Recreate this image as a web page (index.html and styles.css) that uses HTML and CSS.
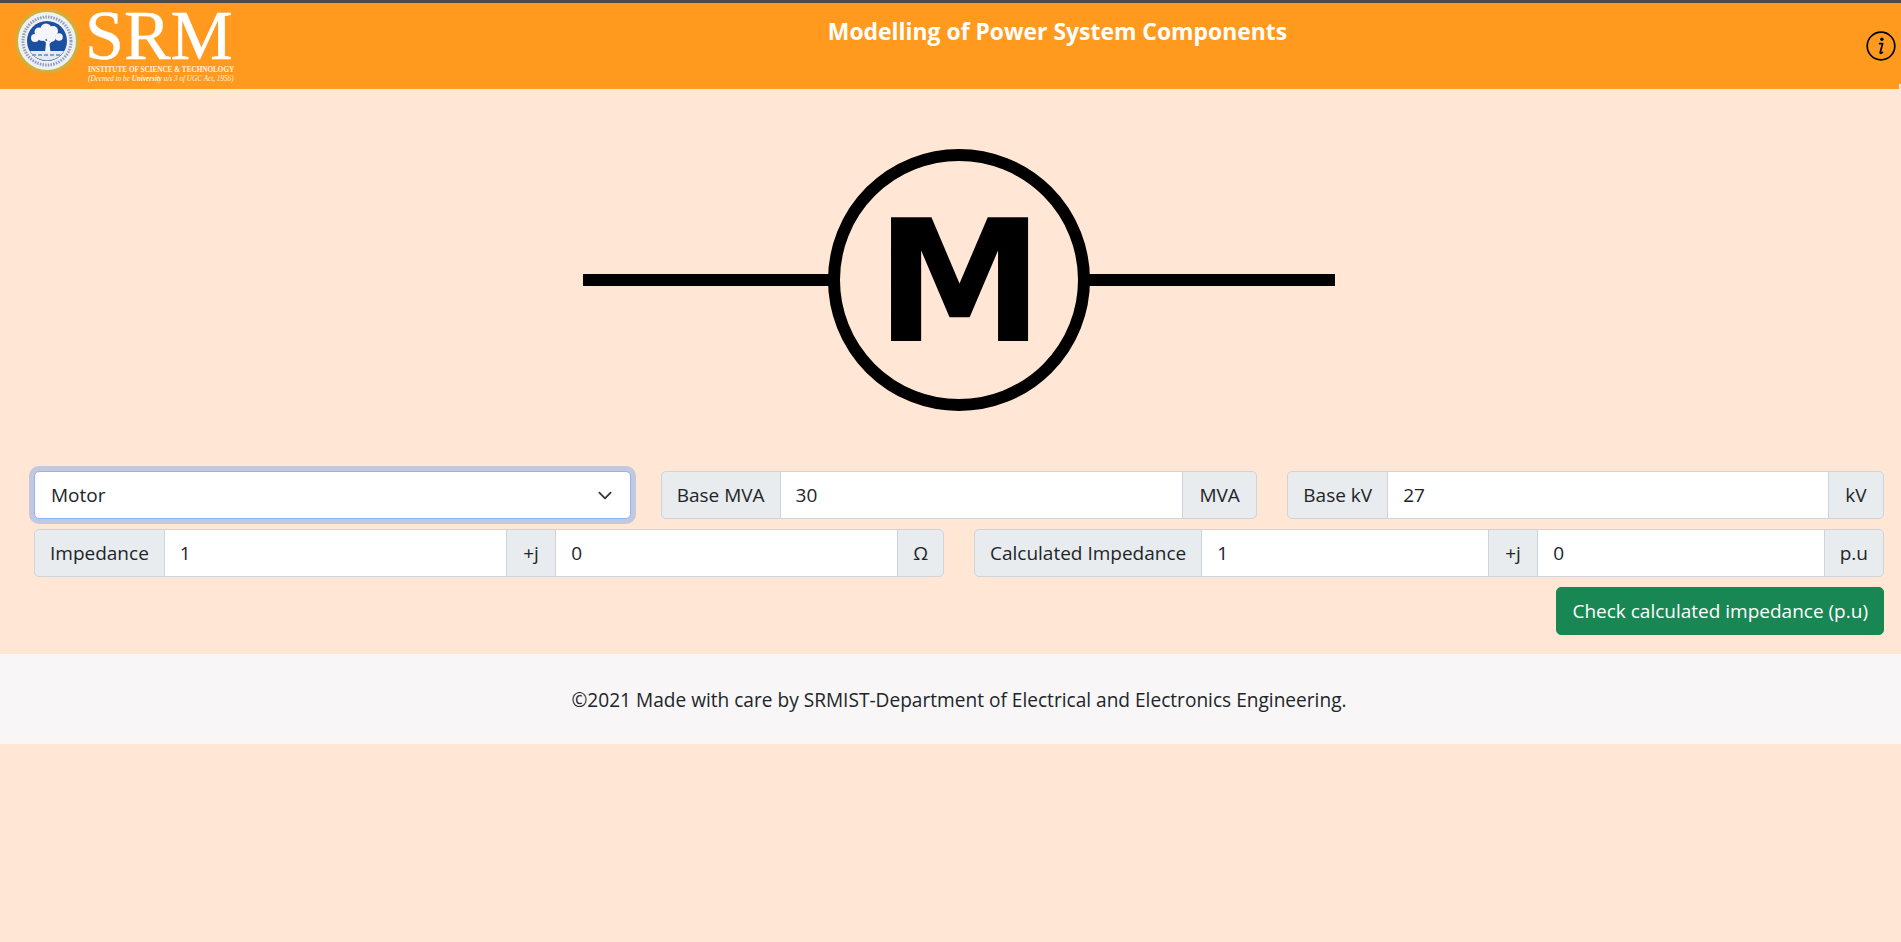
FILE: index.html
```html
<!DOCTYPE html>
<html lang="en">
<head>
<meta charset="utf-8">
<title>Modelling of Power System Components</title>
<link rel="stylesheet" href="styles.css">
</head>
<body>
<header class="topbar">
  <div class="brand">
    <svg class="seal" width="64" height="64" viewBox="0 0 64 64" aria-label="SRM seal">
      <circle cx="32" cy="32" r="30.500" fill="#eef0f3" stroke="#cdb13c" stroke-width="3"/>
      <circle cx="32" cy="32" r="24" fill="none" stroke="#8d9dbd" stroke-width="3" stroke-dasharray="1.500 1.200"/>
      <circle cx="32" cy="32" r="20" fill="#1c4f9f"/>
      <path d="M15 42a20 20 0 0 0 34 0z" fill="#e6eaf0"/>
      <path d="M17 46h30" stroke="#8d9dbd" stroke-width="2" stroke-dasharray="4 2"/>
      <path d="M30 43.500l1-10-5-4 6 2.500 1.500-4 .5 5 5-3-4.500 5 1 8.500z" fill="#f4f6fa"/>
      <g fill="#f4f6fa">
        <circle cx="24" cy="23" r="4.500"/>
        <circle cx="31" cy="20" r="5.500"/>
        <circle cx="38" cy="22" r="5"/>
        <circle cx="44" cy="28" r="3.800"/>
        <circle cx="20" cy="29" r="4"/>
        <circle cx="27" cy="27" r="5"/>
        <circle cx="36" cy="28" r="5"/>
      </g>
    </svg>
    <div class="wordmark">
      <span class="wordmark-name">SRM</span>
      <span class="wordmark-line">INSTITUTE OF SCIENCE &amp; TECHNOLOGY</span>
      <span class="wordmark-note">(Deemed to be <b>University</b> u/s 3 of UGC Act, 1956)</span>
    </div>
  </div>
  <h1 class="title">Modelling of Power System Components</h1>
  <svg class="info" width="30" height="30" viewBox="0 0 30 30" aria-label="Information">
    <circle cx="15" cy="15" r="13.800" fill="none" stroke="#000" stroke-width="1.700"/>
    <circle cx="15.900" cy="8.200" r="1.700" fill="#000"/>
    <path d="M13.600 12.700h3l-2.400 8.800c-.2 1 .8 1.100 2.300-.1" fill="none" stroke="#000" stroke-width="1.700" stroke-linecap="round" stroke-linejoin="round"/>
  </svg>
  <span class="notch"></span>
</header>

<main class="content">
  <div class="diagram">
    <svg width="752" height="262" viewBox="0 0 752 262" aria-label="Motor symbol">
      <rect x="0" y="125" width="248" height="12" fill="#000"/>
      <rect x="504" y="125" width="248" height="12" fill="#000"/>
      <circle cx="376" cy="131" r="125" fill="none" stroke="#000" stroke-width="12"/>
      <text class="motor-letter" x="292.500" y="192">M</text>
    </svg>
  </div>

  <div class="row row-three">
    <select class="field-select">
      <option>Motor</option>
    </select>
    <div class="group">
      <span class="addon">Base MVA</span>
      <input class="field" type="text" value="30">
      <span class="addon addon-wide">MVA</span>
    </div>
    <div class="group">
      <span class="addon">Base kV</span>
      <input class="field" type="text" value="27">
      <span class="addon addon-wide">kV</span>
    </div>
  </div>

  <div class="row row-two">
    <div class="group">
      <span class="addon">Impedance</span>
      <input class="field" type="text" value="1">
      <span class="addon addon-wide">+j</span>
      <input class="field" type="text" value="0">
      <span class="addon">Ω</span>
    </div>
    <div class="group">
      <span class="addon">Calculated Impedance</span>
      <input class="field" type="text" value="1">
      <span class="addon addon-wide">+j</span>
      <input class="field" type="text" value="0">
      <span class="addon">p.u</span>
    </div>
  </div>

  <div class="actions">
    <button class="check-btn" type="button">Check calculated impedance (p.u)</button>
  </div>
</main>

<footer class="footer">©2021 Made with care by SRMIST-Department of Electrical and Electronics Engineering.</footer>
</body>
</html>
```

FILE: styles.css
```css
* { box-sizing: border-box; }

html, body { height: 100%; }

body {
  margin: 0;
  background: #ffe6d5;
  color: #212529;
  font-family: "Open Sans", "Noto Sans", sans-serif;
  font-size: 19px;
  line-height: 1.5;
}

.topbar {
  position: relative;
  display: flex;
  align-items: flex-start;
  height: 89px;
  padding: 0 5px 0 15px;
  background: #ff9a1f;
  border-top: 3px solid #4a4a4a;
}

.brand { display: flex; flex: none; gap: 8px; width: 226px; }
.seal { flex: none; margin-top: 6px; }

.wordmark {
  display: flex;
  flex-direction: column;
  margin-top: 4px;
  color: #fff;
  font-family: "Liberation Serif", serif;
  white-space: nowrap;
}
.wordmark-name { margin-left: -2px; font-size: 70px; line-height: 58px; -webkit-text-stroke: .4px #fff; }
.wordmark-line { margin: 1px 0 0 1px; color: #fff3e0; font-size: 7.200px; font-weight: 700; line-height: 9px; }
.wordmark-note { margin-left: 1px; color: #fff3e0; font-size: 7.200px; font-style: italic; line-height: 9px; }

.title {
  flex: 1;
  margin: 14px 0 0;
  padding-left: 8px;
  color: #fff;
  font-size: 22.900px;
  font-weight: 700;
  line-height: 30px;
  text-align: center;
}

.info { flex: none; margin-top: 28px; }

.notch {
  position: absolute;
  right: 0;
  bottom: 0;
  width: 2px;
  height: 5px;
  background: #ffe6d5;
}

.content { padding: 0 17px 19px 34px; }

.diagram {
  display: flex;
  justify-content: center;
  padding: 60px 0;
}
.diagram svg { display: block; }
.motor-letter { font-family: "DejaVu Sans", sans-serif; font-size: 169px; font-weight: 700; fill: #000; }

.row { display: grid; column-gap: 30px; margin-bottom: 10px; }
.row-three { grid-template-columns: repeat(3, 1fr); }
.row-two { grid-template-columns: repeat(2, 1fr); }

.field-select {
  height: 48px;
  width: 100%;
  padding: 0 45px 0 16px;
  appearance: none;
  background: #fff url("data:image/svg+xml,%3csvg xmlns='http://www.w3.org/2000/svg' viewBox='0 0 16 16'%3e%3cpath fill='none' stroke='%23343a40' stroke-linecap='round' stroke-linejoin='round' stroke-width='2' d='M2 5l6 6 6-6'/%3e%3c/svg%3e") no-repeat right 15px center / 20px 15px;
  border: 1px solid #86b7fe;
  border-radius: 5px;
  box-shadow: 0 0 0 5px rgba(13, 110, 253, .25);
  color: #212529;
  font: inherit;
  outline: 0;
}

.group { display: flex; height: 48px; }

.addon {
  display: flex;
  flex: none;
  align-items: center;
  padding: 0 15px;
  background: #e9ecef;
  border: 1px solid #ced4da;
  margin-left: -1px;
  white-space: nowrap;
}
.addon:first-child { margin-left: 0; border-radius: 5px 0 0 5px; }
.addon:last-child { border-radius: 0 5px 5px 0; }
.addon-wide { padding: 0 16.500px; }

.field {
  flex: 1;
  min-width: 0;
  margin-left: -1px;
  padding: 0 15px;
  background: #fff;
  border: 1px solid #ced4da;
  border-radius: 0;
  color: #212529;
  font: inherit;
  outline: 0;
}

.actions { display: flex; justify-content: flex-end; }

.check-btn {
  height: 48px;
  padding: 0 15px;
  background: #198754;
  border: 1px solid #198754;
  border-radius: 5px;
  color: #fff;
  font: inherit;
}

.footer {
  height: 90px;
  padding-left: 17px;
  background: #f8f6f7;
  font-size: 19.100px;
  line-height: 92px;
  text-align: center;
}
```
